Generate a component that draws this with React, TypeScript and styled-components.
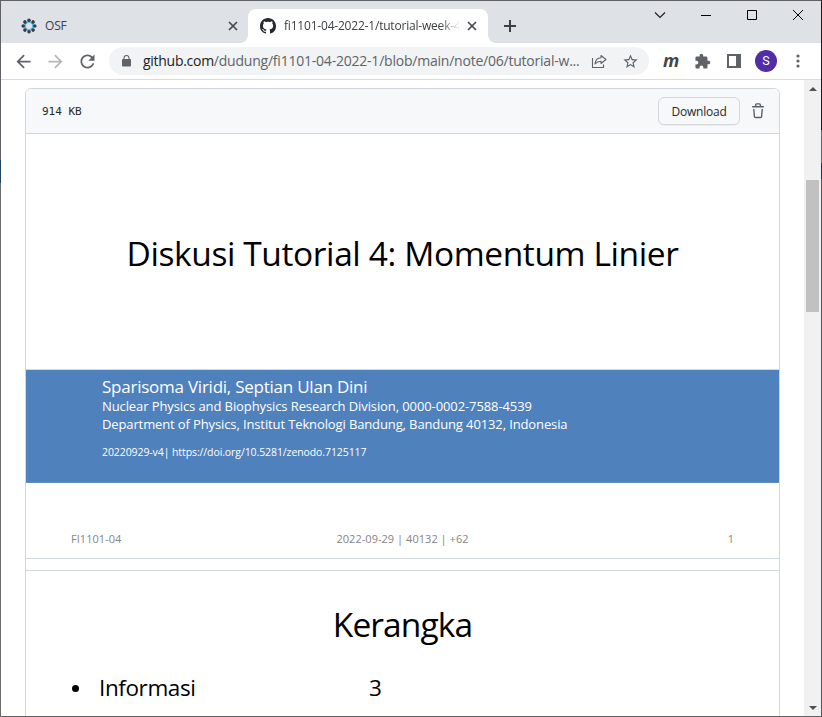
import React from 'react';
import styled, { createGlobalStyle, css } from 'styled-components';

const GlobalStyle = createGlobalStyle`
  * { box-sizing: border-box; }
  body { margin: 0; background: #fff; font-family: 'Open Sans', 'Noto Sans', sans-serif; }
`;

const Window = styled.div`
  width: 822px;
  height: 717px;
  display: grid;
  grid-template-columns: 1px 820px 1px;
  grid-template-rows: 1px 715px 1px;
  background: #5f6166;
  overflow: hidden;
`;

const Edge = styled.div<{ $side: 'left' | 'right' }>`
  grid-row: 1 / 4;
  grid-column: ${p => (p.$side === 'left' ? 1 : 3)};
  background: ${p =>
    p.$side === 'left'
      ? 'linear-gradient(#5f6166 0 160px, #1f4468 160px 183px, #6b6b6b 183px)'
      : 'linear-gradient(#1c1c1e 0 130px, #626468 130px 163px, #1f3448 163px 179px, #55575b 179px)'};
`;

const Frame = styled.div`
  grid-column: 2;
  grid-row: 2;
  display: flex;
  flex-direction: column;
  background: #fff;
  overflow: hidden;
`;

const TabStrip = styled.div`
  height: 42px;
  flex: none;
  display: flex;
  align-items: flex-end;
  background: #dee1e6;
`;

const Tab = styled.div<{ $active?: boolean }>`
  position: relative;
  display: flex;
  align-items: center;
  height: 34px;
  width: ${p => (p.$active ? 240 : 247)}px;
  padding: 0 ${p => (p.$active ? '9px 0 12px' : '8px 0 20px')};
  color: #3c4043;
  ${p =>
    p.$active &&
    css`
      background: #fff;
      border-radius: 8px 8px 0 0;
      &::before,
      &::after {
        content: '';
        position: absolute;
        bottom: 0;
        width: 8px;
        height: 8px;
      }
      &::before {
        left: -8px;
        background: radial-gradient(circle at 0 0, transparent 7.5px, #fff 8.2px);
      }
      &::after {
        right: -8px;
        background: radial-gradient(circle at 100% 0, transparent 7.5px, #fff 8.2px);
      }
    `}
`;

const TabTitle = styled.span<{ $fade?: boolean }>`
  flex: 1;
  margin-left: 8px;
  font-size: 12px;
  line-height: 18px;
  letter-spacing: -0.2px;
  white-space: nowrap;
  overflow: hidden;
  ${p =>
    p.$fade &&
    css`
      margin-right: 5px;
      mask-image: linear-gradient(90deg, #000 calc(100% - 20px), transparent);
    `}
`;

const Icon = styled.svg`
  display: block;
  flex: none;
`;

const NewTab = styled.div`
  margin-left: 15px;
  height: 34px;
  display: flex;
  align-items: center;
`;

const WindowControls = styled.div`
  align-self: flex-start;
  margin-left: auto;
  display: flex;
  height: 28px;
  align-items: center;
`;

const Control = styled.div`
  width: 46px;
  display: flex;
  justify-content: center;
`;

const Toolbar = styled.div`
  height: 37px;
  flex: none;
  display: flex;
  align-items: center;
  border-bottom: 1px solid #d9dbdf;
  color: #5f6368;
`;

const NavButtons = styled.div`
  display: flex;
  gap: 11px;
  padding-left: 12px;
  width: 108px;
`;

const Omnibox = styled.div`
  width: 540px;
  height: 28px;
  border-radius: 14px;
  background: #f1f3f4;
  display: flex;
  align-items: center;
  padding: 0 10px 0 13px;
`;

const Url = styled.span`
  flex: 1;
  margin-left: 12px;
  font-size: 14px;
  line-height: 20px;
  letter-spacing: -0.22px;
  white-space: nowrap;
  color: #606468;
`;

const Host = styled.span`
  color: #202124;
  letter-spacing: -0.28px;
`;

const OmniActions = styled.div`
  display: flex;
  align-items: center;
  gap: 15px;
`;

const Extensions = styled.div`
  flex: 1;
  display: flex;
  align-items: center;
  padding-left: 14px;
`;

const Mendeley = styled.span`
  width: 17px;
  margin-right: 14px;
  font: italic 700 18px/20px 'Open Sans', sans-serif;
  color: #454545;
  margin-top: -3px;
`;

const Avatar = styled.div`
  width: 22px;
  height: 22px;
  border-radius: 50%;
  background: #512da8;
  color: #fff;
  font: 400 12.5px/22px Roboto, sans-serif;
  text-align: center;
  margin: 0 19px 0 14px;
`;

const Spaced = styled.div`
  margin-left: 16px;
`;

const Viewport = styled.div`
  flex: 1;
  min-height: 0;
  display: flex;
  overflow: hidden;
`;

const Page = styled.main`
  flex: 1;
  padding: 8px 24px 0;
  overflow: hidden;
`;

const FileBox = styled.section`
  height: 700px;
  border: 1px solid #d0d7de;
  border-radius: 6px;
  overflow: hidden;
`;

const FileHeader = styled.header`
  height: 45px;
  display: flex;
  align-items: center;
  background: #f6f8fa;
  border-bottom: 1px solid #d0d7de;
  padding: 0 13px 0 16px;
  color: #57606a;
`;

const FileSize = styled.span`
  flex: 1;
  padding-top: 2px;
  font: 11px/18px 'DejaVu Sans Mono', monospace;
  color: #24292f;
`;

const Download = styled.button`
  width: 82px;
  height: 28px;
  margin-right: 10px;
  padding: 1px 0 0;
  border: 1px solid #d5d8da;
  border-radius: 6px;
  background: #f6f8fa;
  box-shadow: 0 1px 0 rgba(27, 31, 36, 0.04);
  font: 500 12px/24px 'Open Sans', sans-serif;
  letter-spacing: -0.2px;
  color: #24292f;
`;

const Slide = styled.article<{ $height: number }>`
  height: ${p => p.$height}px;
  display: flex;
  flex-direction: column;
  color: #000;
`;

const SlideGap = styled.div`
  height: 13px;
  border: solid #d0d7de;
  border-width: 1px 0;
`;

const SlideTitle = styled.h1<{ $top: number; $tracking: number }>`
  margin: ${p => p.$top}px 0 0;
  font-size: 33.5px;
  line-height: 40px;
  font-weight: 400;
  text-align: center;
  white-space: nowrap;
  letter-spacing: ${p => p.$tracking}px;
`;

const Band = styled.div`
  margin-top: 96px;
  height: 114px;
  border-top: 1px solid #cbdbe7;
  border-bottom: 1px solid #5f8dc6;
  background: #4f81bd;
  padding: 7px 0 0 76px;
  color: #fff;
`;

const BandLine = styled.div<{ $size: number; $line: number; $tracking: number; $top?: number }>`
  margin-top: ${p => p.$top ?? 0}px;
  font-size: ${p => p.$size}px;
  line-height: ${p => p.$line}px;
  letter-spacing: ${p => p.$tracking}px;
  white-space: nowrap;
`;

const SlideFooter = styled.footer`
  display: grid;
  grid-template-columns: 1fr auto 1fr;
  margin-top: 48px;
  padding: 0 45px;
  font-size: 11px;
  line-height: 16px;
  letter-spacing: 0.04px;
  color: #858585;
  span:last-child { text-align: right; }
`;

const AgendaRow = styled.div`
  display: flex;
  align-items: center;
  margin-top: 29px;
  padding-left: 46px;
  font-size: 22.5px;
  line-height: 30px;
  letter-spacing: -0.4px;
`;

const Bullet = styled.span`
  width: 7px;
  height: 7px;
  border-radius: 50%;
  background: #000;
`;

const Topic = styled.span`
  width: 270px;
  margin-left: 20px;
`;

const Scrollbar = styled.div`
  width: 17px;
  background: #f1f1f1;
  display: flex;
  flex-direction: column;
  align-items: center;
  padding: 6px 0 5px;
`;

const Thumb = styled.div`
  width: 13px;
  height: 132px;
  margin: 89px 0 auto;
  background: #c1c1c1;
`;

const CloseGlyph = () => (
  <Icon width="14" height="14" viewBox="0 0 14 14" stroke="#45494d" strokeWidth="1.7">
    <path d="M3 3l8 8M11 3l-8 8" />
  </Icon>
);

const OsfLogo = () => (
  <Icon width="16" height="16" viewBox="-8 -8 16 16">
    {[0, 45, 90, 135, 180, 225, 270, 315].map(a => (
      <g key={a} transform={`rotate(${a})`}>
        <path d="M-2 -4.6 L2 -4.6 L1.4 -3.2 L-1.4 -3.2z" fill="#38b0e8" />
        <circle cx="0" cy="-5.8" r="1.75" fill="#333c42" />
      </g>
    ))}
  </Icon>
);

const GithubMark = () => (
  <Icon width="16" height="16" viewBox="0 0 16 16" fill="#24292f">
    <path d="M8 0c4.42 0 8 3.58 8 8a8.013 8.013 0 0 1-5.45 7.59c-.4.08-.55-.17-.55-.38 0-.27.01-1.13.01-2.2 0-.75-.25-1.23-.54-1.48 1.78-.2 3.65-.88 3.65-3.95 0-.88-.31-1.59-.82-2.15.08-.2.36-1.02-.08-2.12 0 0-.67-.22-2.2.82-.64-.18-1.32-.27-2-.27-.68 0-1.36.09-2 .27-1.53-1.03-2.2-.82-2.2-.82-.44 1.1-.16 1.92-.08 2.12-.51.56-.82 1.28-.82 2.15 0 3.06 1.86 3.75 3.64 3.95-.23.2-.44.55-.51 1.07-.46.21-1.61.55-2.33-.66-.15-.24-.6-.83-1.23-.82-.67.01-.27.38.01.53.34.19.73.9.82 1.13.16.45.68 1.31 2.69.94 0 .67.01 1.3.01 1.49 0 .21-.15.45-.55.38A7.995 7.995 0 0 1 0 8c0-4.42 3.58-8 8-8Z" />
  </Icon>
);

const TrashIcon = () => (
  <Icon width="16" height="16" viewBox="0 0 16 16" fill="none" stroke="#57606a" strokeWidth="1.4" strokeLinecap="round" strokeLinejoin="round">
    <path d="M2.7 3.7h10.6M5.7 3.500V1.700q0-.8.8-.8h3q.8 0 .8.8v1.800M3.800 6.500l.6 7q.1 1 1.100 1h5q1 0 1.100-1l.6-7" />
  </Icon>
);

const Glyph = ({ d, size = 21, color = '#5f6368' }: { d: string; size?: number; color?: string }) => (
  <Icon width={size} height={size} viewBox="0 0 24 24" fill={color}>
    <path d={d} />
  </Icon>
);

const BACK = 'M20 11H7.83l5.59-5.59L12 4l-8 8 8 8 1.41-1.41L7.83 13H20v-2z';
const FORWARD = 'M4 13h12.17l-5.59 5.59L12 20l8-8-8-8-1.41 1.41L16.17 11H4v2z';
const RELOAD =
  'M17.65 6.35C16.2 4.9 14.21 4 12 4c-4.42 0-7.99 3.58-7.99 8s3.57 8 7.99 8c3.73 0 6.84-2.55 7.73-6h-2.08c-.82 2.33-3.04 4-5.65 4-3.31 0-6-2.69-6-6s2.69-6 6-6c1.66 0 3.14.69 4.22 1.78L13 11h7V4l-2.35 2.35z';
const PUZZLE =
  'M20.5 11H19V7c0-1.1-.9-2-2-2h-4V3.5C13 2.12 11.88 1 10.5 1S8 2.12 8 3.5V5H4c-1.1 0-1.99.9-1.99 2v3.8H3.5c1.49 0 2.7 1.21 2.7 2.7s-1.21 2.7-2.7 2.7H2V20c0 1.1.9 2 2 2h3.8v-1.5c0-1.49 1.21-2.7 2.7-2.7 1.49 0 2.7 1.21 2.7 2.7V22H17c1.1 0 2-.9 2-2v-4h1.5c1.38 0 2.5-1.12 2.5-2.5S21.88 11 20.5 11z';
const STAR =
  'M22 9.24l-7.19-.62L12 2 9.19 8.63 2 9.24l5.46 4.73L5.82 21 12 17.27 18.18 21l-1.63-7.03L22 9.24zM12 15.4l-3.76 2.27 1-4.28-3.32-2.88 4.38-.38L12 6.1l1.71 4.04 4.38.38-3.32 2.88 1 4.28L12 15.4z';

export default function App() {
  return (
    <Window>
      <GlobalStyle />
      <Edge $side="left" />
      <Frame>
        <TabStrip>
          <Tab>
            <OsfLogo />
            <TabTitle>OSF</TabTitle>
            <CloseGlyph />
          </Tab>
          <Tab $active>
            <GithubMark />
            <TabTitle $fade>fi1101-04-2022-1/tutorial-week-4</TabTitle>
            <CloseGlyph />
          </Tab>
          <NewTab>
            <Icon width="14" height="14" viewBox="0 0 14 14" stroke="#3c4043" strokeWidth="2">
              <path d="M7 1v12M1 7h12" />
            </Icon>
          </NewTab>
          <WindowControls>
            <Control>
              <Icon width="12" height="12" viewBox="0 0 12 12" fill="none" stroke="#222" strokeWidth="1.2">
                <path d="M1 3.5l5 5 5-5" />
              </Icon>
            </Control>
            <Control>
              <Icon width="10" height="10" viewBox="0 0 10 10" stroke="#000">
                <path d="M0 5.5h10" />
              </Icon>
            </Control>
            <Control>
              <Icon width="10" height="10" viewBox="0 0 10 10" fill="none" stroke="#000">
                <path d="M.5.5h9v9h-9z" />
              </Icon>
            </Control>
            <Control>
              <Icon width="10" height="10" viewBox="0 0 10 10" stroke="#000">
                <path d="M0 0l10 10M10 0L0 10" />
              </Icon>
            </Control>
          </WindowControls>
        </TabStrip>

        <Toolbar>
          <NavButtons>
            <Glyph d={BACK} />
            <Glyph d={FORWARD} color="#b6b8bb" />
            <Glyph d={RELOAD} />
          </NavButtons>
          <Omnibox>
            <Icon width="9" height="12" viewBox="0 0 9 12" fill="#5f6368">
              <rect x="0" y="4" width="9" height="7.5" rx="1" />
              <path d="M2 4.5V3a2.5 2.5 0 0 1 5 0v1.5" fill="none" stroke="#5f6368" strokeWidth="1.1" />
            </Icon>
            <Url>
              <Host>github.com</Host>/dudung/fi1101-04-2022-1/blob/main/note/06/tutorial-w...
            </Url>
            <OmniActions>
              <Icon width="16" height="15" viewBox="0 0 16 15" fill="none" stroke="#5f6368" strokeWidth="1.1">
                <path d="M1.5 4v9.5H12.500V10.500" />
                <path d="M10 1.500L15 5.500 10 9.500V7.300C7.300 7.300 5.500 8.200 4 10 4.300 6.500 6.500 4 10 3.800z" strokeLinejoin="round" />
              </Icon>
              <Glyph d={STAR} size={17} />
            </OmniActions>
          </Omnibox>
          <Extensions>
            <Mendeley>m</Mendeley>
            <Glyph d={PUZZLE} size={17} />
            <Spaced>
              <Icon width="14" height="14" viewBox="0 0 14 14">
                <path fill="#5f6368" fillRule="evenodd" d="M0 0h14v14H0zM2 2v10h7V2z" />
              </Icon>
            </Spaced>
            <Avatar>S</Avatar>
            <Icon width="4" height="14" viewBox="0 0 4 14" fill="#5f6368">
              <circle cx="2" cy="2" r="1.6" />
              <circle cx="2" cy="7" r="1.6" />
              <circle cx="2" cy="12" r="1.6" />
            </Icon>
          </Extensions>
        </Toolbar>

        <Viewport>
          <Page>
            <FileBox>
              <FileHeader>
                <FileSize>914 KB</FileSize>
                <Download>Download</Download>
                <TrashIcon />
              </FileHeader>
              <Slide $height={424}>
                <SlideTitle $top={99} $tracking={-0.4}>Diskusi Tutorial 4: Momentum Linier</SlideTitle>
                <Band>
                  <BandLine $size={17} $line={20} $tracking={-0.24}>Sparisoma Viridi, Septian Ulan Dini</BandLine>
                  <BandLine $size={13} $line={18} $tracking={-0.1}>
                    Nuclear Physics and Biophysics Research Division, 0000-0002-7588-4539
                  </BandLine>
                  <BandLine $size={13} $line={18} $tracking={-0.12}>
                    Department of Physics, Institut Teknologi Bandung, Bandung 40132, Indonesia
                  </BandLine>
                  <BandLine $size={10.5} $line={16} $tracking={-0.09} $top={11}>
                    20220929-v4| https://doi.org/10.5281/zenodo.7125117
                  </BandLine>
                </Band>
                <SlideFooter>
                  <span>FI1101-04</span>
                  <span>2022-09-29 | 40132 | +62</span>
                  <span>1</span>
                </SlideFooter>
              </Slide>
              <SlideGap />
              <Slide $height={400}>
                <SlideTitle $top={33} $tracking={-0.9}>Kerangka</SlideTitle>
                <AgendaRow>
                  <Bullet />
                  <Topic>Informasi</Topic>
                  <span>3</span>
                </AgendaRow>
              </Slide>
            </FileBox>
          </Page>
          <Scrollbar>
            <Icon width="8" height="5" viewBox="0 0 8 5" fill="#505050">
              <path d="M0 5L4 1l4 4z" />
            </Icon>
            <Thumb />
            <Icon width="8" height="5" viewBox="0 0 8 5" fill="#505050">
              <path d="M0 0l4 4 4-4z" />
            </Icon>
          </Scrollbar>
        </Viewport>
      </Frame>
      <Edge $side="right" />
    </Window>
  );
}
